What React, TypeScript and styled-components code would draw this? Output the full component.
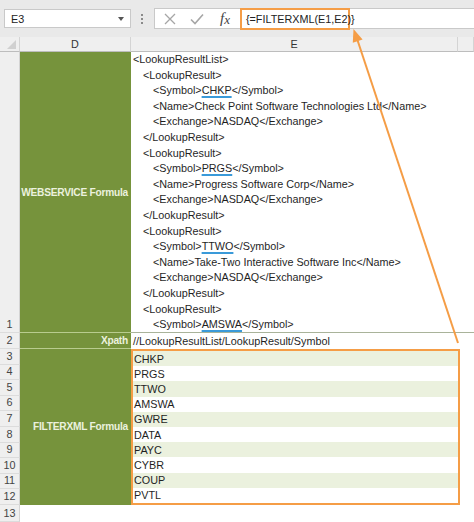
import React, { FunctionComponent } from 'react'
import styled, { createGlobalStyle } from 'styled-components'

const GREEN = '#76933c'
const LIGHT_GREEN = '#ebf1de'
const ORANGE = '#f59d46'
const HEADER_BG = '#efefef'
const GRID_LINE = '#d4d4d4'
const FONT_SIZE = '10.8px'

interface XmlLine {
    indent: number
    before: string
    symbol?: string
    after?: string
}

const xmlLines: XmlLine[] = [
    { indent: 0, before: '<LookupResultList>' },
    { indent: 1, before: '<LookupResult>' },
    { indent: 2, before: '<Symbol>', symbol: 'CHKP', after: '</Symbol>' },
    { indent: 2, before: '<Name>Check Point Software Technologies Ltd</Name>' },
    { indent: 2, before: '<Exchange>NASDAQ</Exchange>' },
    { indent: 1, before: '</LookupResult>' },
    { indent: 1, before: '<LookupResult>' },
    { indent: 2, before: '<Symbol>', symbol: 'PRGS', after: '</Symbol>' },
    { indent: 2, before: '<Name>Progress Software Corp</Name>' },
    { indent: 2, before: '<Exchange>NASDAQ</Exchange>' },
    { indent: 1, before: '</LookupResult>' },
    { indent: 1, before: '<LookupResult>' },
    { indent: 2, before: '<Symbol>', symbol: 'TTWO', after: '</Symbol>' },
    { indent: 2, before: '<Name>Take-Two Interactive Software Inc</Name>' },
    { indent: 2, before: '<Exchange>NASDAQ</Exchange>' },
    { indent: 1, before: '</LookupResult>' },
    { indent: 1, before: '<LookupResult>' },
    { indent: 2, before: '<Symbol>', symbol: 'AMSWA', after: '</Symbol>' },
]

const symbols = ['CHKP', 'PRGS', 'TTWO', 'AMSWA', 'GWRE', 'DATA', 'PAYC', 'CYBR', 'COUP', 'PVTL']

const GlobalStyle = createGlobalStyle`
    html, body {
        margin: 0;
        padding: 0;
        background: #fff;
    }
    body {
        font-family: "Liberation Sans", Arial, sans-serif;
    }
`

const App: FunctionComponent = () => {
    return (
        <Page>
            <GlobalStyle />
            <Toolbar>
                <NameBox>
                    <span>E3</span>
                    <DropArrow />
                </NameBox>
                <Grip>
                    <Dot />
                    <Dot />
                    <Dot />
                </Grip>
                <FormulaBar>
                    <ToolIcon width="12" height="12" viewBox="0 0 12 12" gap={14}>
                        <path d="M1 1 L11 11 M11 1 L1 11" stroke="#a6a6a6" strokeWidth="1.3" fill="none" />
                    </ToolIcon>
                    <ToolIcon width="14" height="12" viewBox="0 0 14 12" gap={16}>
                        <path d="M1 6.5 L5 10.5 L13 1.5" stroke="#a6a6a6" strokeWidth="1.6" fill="none" />
                    </ToolIcon>
                    <Fx>
                        f<sub>x</sub>
                    </Fx>
                    <FormulaInput>{'{=FILTERXML(E1,E2)}'}</FormulaInput>
                </FormulaBar>
            </Toolbar>

            <Sheet>
                <Corner>
                    <CornerTriangle />
                </Corner>
                <ColHeader col={2}>D</ColHeader>
                <ColHeader col={3}>E</ColHeader>
                <ColHeader col={4} />

                <RowNum row={2}>1</RowNum>
                <Label row="2" bordered>WEBSERVICE Formula</Label>
                <XmlCell>
                    {xmlLines.map((line, i) => (
                        <XmlRow key={i} indent={line.indent}>
                            {line.before}
                            {line.symbol && <Underlined>{line.symbol}</Underlined>}
                            {line.after}
                        </XmlRow>
                    ))}
                </XmlCell>

                <RowNum row={3}>2</RowNum>
                <Label row="3" bordered>Xpath</Label>
                <PathCell>//LookupResultList/LookupResult/Symbol</PathCell>

                {symbols.map((_, i) => (
                    <RowNum key={i} row={i + 4}>{i + 3}</RowNum>
                ))}
                <Label row="4 / span 10">FILTERXML Formula</Label>
                <ResultBox>
                    {symbols.map((s, i) => (
                        <ResultRow key={s} striped={i % 2 === 0}>{s}</ResultRow>
                    ))}
                </ResultBox>

                <RowNum row={14}>13</RowNum>
            </Sheet>

            <Arrow width="474" height="522" viewBox="0 0 474 522">
                <line x1="458" y1="343" x2="357.6" y2="40.5" stroke={ORANGE} strokeWidth="2" />
                <polygon points="353.5,29 362.6,39.6 352.8,42.8" fill={ORANGE} />
            </Arrow>
        </Page>
    )
}

const Page = styled.div`
    position: relative;
    width: 474px;
    height: 522px;
    overflow: hidden;
    background: #fff;
    color: #1f1f1f;
    font-size: ${FONT_SIZE};
`

const Toolbar = styled.div`
    display: flex;
    align-items: center;
    height: 37px;
    background: #e9e9e9;
    box-sizing: border-box;
`

const NameBox = styled.div`
    display: flex;
    align-items: center;
    justify-content: space-between;
    box-sizing: border-box;
    width: 127px;
    height: 19px;
    margin-left: 4px;
    padding: 0 6px 0 6px;
    background: #fff;
    border: 1px solid #c9c9c9;
    color: #222;
`

const DropArrow = styled.span`
    width: 0;
    height: 0;
    border-left: 3px solid transparent;
    border-right: 3px solid transparent;
    border-top: 4px solid #555;
`

const Grip = styled.div`
    display: flex;
    flex-direction: column;
    gap: 2px;
    margin: 0 11px 0 10px;
`

const Dot = styled.span`
    width: 2px;
    height: 2px;
    background: #8a8a8a;
`

const FormulaBar = styled.div`
    display: flex;
    align-items: center;
    flex: 1;
    height: 21px;
    box-sizing: border-box;
    background: #fff;
    border: 1px solid #c9c9c9;
    border-right: none;
    padding-left: 9px;
`

const ToolIcon = styled.svg<{ gap: number }>`
    margin-right: ${({ gap }) => gap}px;
    flex-shrink: 0;
`

const Fx = styled.span`
    font-family: "Liberation Serif", "Times New Roman", serif;
    font-style: italic;
    font-size: 15px;
    color: #444;
    line-height: 1;
    margin-right: 10px;

    sub {
        font-size: 13px;
        vertical-align: -1px;
    }
`

const FormulaInput = styled.div`
    display: flex;
    align-items: center;
    box-sizing: border-box;
    height: 22px;
    width: 110px;
    padding-left: 4px;
    border: 2px solid ${ORANGE};
    color: #222;
    white-space: nowrap;
`

const Sheet = styled.div`
    display: grid;
    grid-template-columns: 20px 111px 327px 1fr;
    grid-template-rows: 15px 281px 16px repeat(10, 15.6px) 1fr;
    height: 485px;
`

const Corner = styled.div`
    grid-row: 1;
    grid-column: 1;
    position: relative;
    background: ${HEADER_BG};
    border-right: 1px solid ${GRID_LINE};
    border-bottom: 1px solid #bdbdbd;
`

const CornerTriangle = styled.span`
    position: absolute;
    right: 3px;
    bottom: 2px;
    width: 0;
    height: 0;
    border-left: 9px solid transparent;
    border-bottom: 9px solid #d0d0d0;
`

const ColHeader = styled.div<{ col: number }>`
    grid-row: 1;
    grid-column: ${({ col }) => col};
    display: flex;
    align-items: center;
    justify-content: center;
    background: ${HEADER_BG};
    border-right: 1px solid ${GRID_LINE};
    border-bottom: 1px solid #bdbdbd;
    color: #333;
`

const RowNum = styled.div<{ row: number }>`
    grid-row: ${({ row }) => row};
    grid-column: 1;
    display: flex;
    align-items: flex-end;
    justify-content: center;
    box-sizing: border-box;
    padding-bottom: 1px;
    background: ${HEADER_BG};
    border-right: 1px solid ${GRID_LINE};
    border-bottom: 1px solid #dcdcdc;
    line-height: 13px;
    color: #444;
`

const Label = styled.div<{ row: string; bordered?: boolean }>`
    grid-row: ${({ row }) => row};
    grid-column: 2;
    display: flex;
    align-items: center;
    justify-content: flex-end;
    box-sizing: border-box;
    padding-right: 3px;
    background: ${GREEN};
    color: ${LIGHT_GREEN};
    font-weight: bold;
    font-size: 10.2px;
    letter-spacing: -0.25px;
    white-space: nowrap;
    overflow: hidden;
    ${({ bordered }) => bordered && `border-bottom: 1px solid #b9cc8f;`}
`

const XmlCell = styled.div`
    grid-row: 2;
    grid-column: 3 / span 2;
    box-sizing: border-box;
    border-bottom: 1px solid #a9b39a;
    padding-left: 2px;
`

const XmlRow = styled.div<{ indent: number }>`
    height: 15.6px;
    line-height: 15.6px;
    padding-left: ${({ indent }) => indent * 10}px;
    white-space: nowrap;
`

const Underlined = styled.span`
    text-decoration: underline;
    text-decoration-color: #3a9ad9;
    text-decoration-thickness: 2px;
    text-underline-offset: 2px;
`

const PathCell = styled.div`
    grid-row: 3;
    grid-column: 3;
    display: flex;
    align-items: center;
    padding-left: 2px;
    white-space: nowrap;
`

const ResultBox = styled.div`
    grid-row: 4 / span 10;
    grid-column: 3;
    display: flex;
    flex-direction: column;
    box-sizing: border-box;
    margin-right: -2px;
    border: 2px solid ${ORANGE};
`

const ResultRow = styled.div<{ striped: boolean }>`
    flex: 1;
    display: flex;
    align-items: center;
    padding-left: 1px;
    background: ${({ striped }) => (striped ? LIGHT_GREEN : '#fff')};
`

const Arrow = styled.svg`
    position: absolute;
    top: 0;
    left: 0;
    pointer-events: none;
`

export default App
